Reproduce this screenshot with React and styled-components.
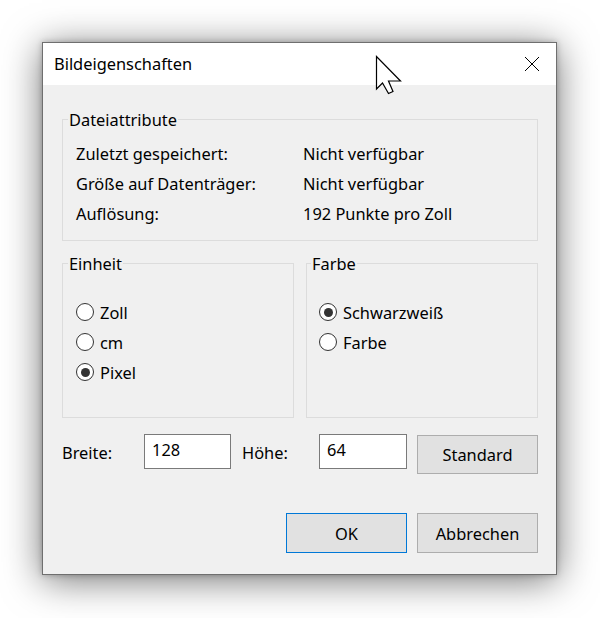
import React from "react";
import styled, { createGlobalStyle } from "styled-components";

const GlobalStyle = createGlobalStyle`
  html, body {
    margin: 0;
    padding: 0;
    background: #ffffff;
  }
  body {
    width: 600px;
    height: 618px;
    overflow: hidden;
    font-family: "Noto Sans", "Open Sans", sans-serif;
    font-size: 16.4px;
    color: #000;
  }
`;

const Page = styled.div`
  width: 600px;
  height: 618px;
  padding: 42px 0 0 42px;
  box-sizing: border-box;
`;

const Window = styled.div`
  position: relative;
  width: 515px;
  box-sizing: border-box;
  border: 1px solid #6f6f6f;
  background: #f0f0f0;
  box-shadow: 0 5px 36px rgba(0, 0, 0, 0.55), 0 0 6px rgba(0, 0, 0, 0.25);
`;

const TitleBar = styled.div`
  height: 42px;
  background: #ffffff;
  display: flex;
  align-items: center;
  justify-content: space-between;
  padding: 0 16px 0 11px;
`;

const Title = styled.span`
  line-height: 20px;
  margin-top: -1px;
`;

const CloseIcon = styled.svg`
  display: block;
  width: 16px;
  height: 16px;
`;

const Cursor = styled.svg`
  position: absolute;
  left: 332px;
  top: 12px;
  width: 28px;
  height: 40px;
  pointer-events: none;
`;

const Body = styled.div`
  padding: 24px 18px 21px 19px;
`;

const Group = styled.fieldset`
  margin: 0;
  min-width: 0;
  border: 1px solid #dcdcdc;
  padding: ${(p) => p.$pad};
`;

const Legend = styled.legend`
  padding: 0 1px;
  margin-left: -8px;
  line-height: 21px;
`;

const InfoGrid = styled.div`
  display: grid;
  grid-template-columns: 227px 1fr;
  grid-auto-rows: 30px;
  align-items: center;
`;

const GroupRow = styled.div`
  display: grid;
  grid-template-columns: 232px 232px;
  gap: 12px;
  margin-top: 12px;
`;

const RadioLabel = styled.label`
  display: flex;
  align-items: center;
  gap: 6px;
  height: 30px;
`;

const RadioCircle = styled.span`
  width: 18px;
  height: 18px;
  box-sizing: border-box;
  border-radius: 50%;
  border: 1.5px solid #333333;
  background: #ffffff;
  display: flex;
  align-items: center;
  justify-content: center;

  &::after {
    content: "";
    width: 9px;
    height: 9px;
    border-radius: 50%;
    background: ${(p) => (p.$checked ? "#333333" : "transparent")};
  }
`;

const SizeRow = styled.div`
  display: flex;
  align-items: flex-start;
  margin-top: 16px;
  height: 40px;
`;

const FieldLabel = styled.span`
  width: ${(p) => p.$w}px;
  padding-left: ${(p) => p.$indent || 0}px;
  box-sizing: border-box;
  line-height: 38px;
`;

const TextBox = styled.div`
  width: ${(p) => p.$w}px;
  height: 35px;
  box-sizing: border-box;
  border: 1px solid #7a7a7a;
  background: #ffffff;
  padding: 4px 7px 0;
  line-height: 22px;
`;

const Button = styled.button`
  width: 121px;
  height: ${(p) => p.$h || 40}px;
  box-sizing: border-box;
  margin: ${(p) => p.$m || 0};
  border: 1px solid ${(p) => (p.$primary ? "#0078d7" : "#adadad")};
  background: #e1e1e1;
  font-family: "Noto Sans", "Open Sans", sans-serif;
  font-size: 16.4px;
  color: #000;
  padding: 0;
`;

const ButtonRow = styled.div`
  display: flex;
  justify-content: flex-end;
  gap: 10px;
  margin-top: 39px;
`;

const Radio = ({ checked, children }) => (
  <RadioLabel>
    <RadioCircle $checked={checked} />
    {children}
  </RadioLabel>
);

export default function App() {
  return (
    <>
      <GlobalStyle />
      <Page>
        <Window>
          <TitleBar>
            <Title>Bildeigenschaften</Title>
            <CloseIcon viewBox="0 0 16 16">
              <path d="M1 1 L15 15 M15 1 L1 15" stroke="#000" strokeWidth="1" fill="none" />
            </CloseIcon>
          </TitleBar>
          <Cursor viewBox="0 0 28 40">
            <path
              d="M1.5 1.5 L1.5 34 L7.5 28 L13.5 38.5 L18 36.5 L13.5 26 L25.5 26 Z"
              fill="#ffffff"
              stroke="#000"
              strokeWidth="1.2"
              strokeLinejoin="miter"
            />
          </Cursor>
          <Body>
            <Group $pad="8px 12px 12px 13px">
              <Legend>Dateiattribute</Legend>
              <InfoGrid>
                <span>Zuletzt gespeichert:</span>
                <span>Nicht verfügbar</span>
                <span>Größe auf Datenträger:</span>
                <span>Nicht verfügbar</span>
                <span>Auflösung:</span>
                <span>192 Punkte pro Zoll</span>
              </InfoGrid>
            </Group>
            <GroupRow>
              <Group $pad="23px 12px 30px 13px">
                <Legend>Einheit</Legend>
                <Radio>Zoll</Radio>
                <Radio>cm</Radio>
                <Radio checked>Pixel</Radio>
              </Group>
              <Group $pad="23px 12px 30px 12px">
                <Legend>Farbe</Legend>
                <Radio checked>Schwarzweiß</Radio>
                <Radio>Farbe</Radio>
              </Group>
            </GroupRow>
            <SizeRow>
              <FieldLabel $w={82}>Breite:</FieldLabel>
              <TextBox $w={87}>128</TextBox>
              <FieldLabel $w={88} $indent={11}>
                Höhe:
              </FieldLabel>
              <TextBox $w={88}>64</TextBox>
              <Button $h={39} $m="1px 0 0 10px">Standard</Button>
            </SizeRow>
            <ButtonRow>
              <Button $primary>OK</Button>
              <Button>Abbrechen</Button>
            </ButtonRow>
          </Body>
        </Window>
      </Page>
    </>
  );
}
